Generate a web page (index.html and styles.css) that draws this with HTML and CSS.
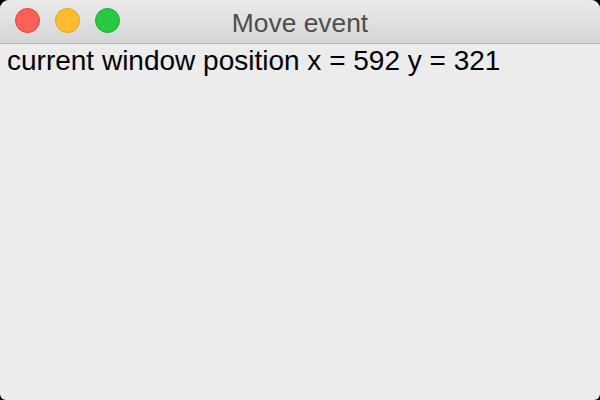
FILE: index.html
```html
<!DOCTYPE html>
<html>
<head>
<meta charset="utf-8">
<link rel="stylesheet" href="styles.css">
</head>
<body>
<div class="window">
  <div class="titlebar">
    <div class="lights">
      <span class="light red"></span>
      <span class="light yellow"></span>
      <span class="light green"></span>
    </div>
    <div class="title">Move event</div>
  </div>
  <div class="content">current window position x = 592 y = 321</div>
</div>
</body>
</html>
```
FILE: styles.css
```css
html, body {
  margin: 0;
  padding: 0;
  width: 600px;
  height: 400px;
  background: #000;
  overflow: hidden;
}
.window {
  width: 600px;
  height: 400px;
  background: #ececec;
  border-radius: 9px 9px 6px 6px;
  overflow: hidden;
  display: flex;
  flex-direction: column;
  font-family: "Liberation Sans", Arial, sans-serif;
}
.titlebar {
  height: 43px;
  flex: none;
  background: linear-gradient(#ebebeb, #d5d5d5);
  border-bottom: 1px solid #b9b9b9;
  position: relative;
  display: flex;
  align-items: center;
  justify-content: center;
}
.lights {
  position: absolute;
  left: 15px;
  top: 8px;
  display: flex;
  gap: 15px;
}
.light {
  width: 23px;
  height: 23px;
  border-radius: 50%;
  border: 1px solid;
}
.red { background: #fe5f57; border-color: #e0443e; }
.yellow { background: #febc2e; border-color: #dea123; }
.green { background: #28c840; border-color: #1aab29; }
.title {
  font-size: 26.4px;
  color: #4d4d4d;
  margin-top: 3px;
}
.content {
  padding: 1px 0 0 7px;
  font-size: 28px;
  color: #000;
  line-height: 32px;
}
```
